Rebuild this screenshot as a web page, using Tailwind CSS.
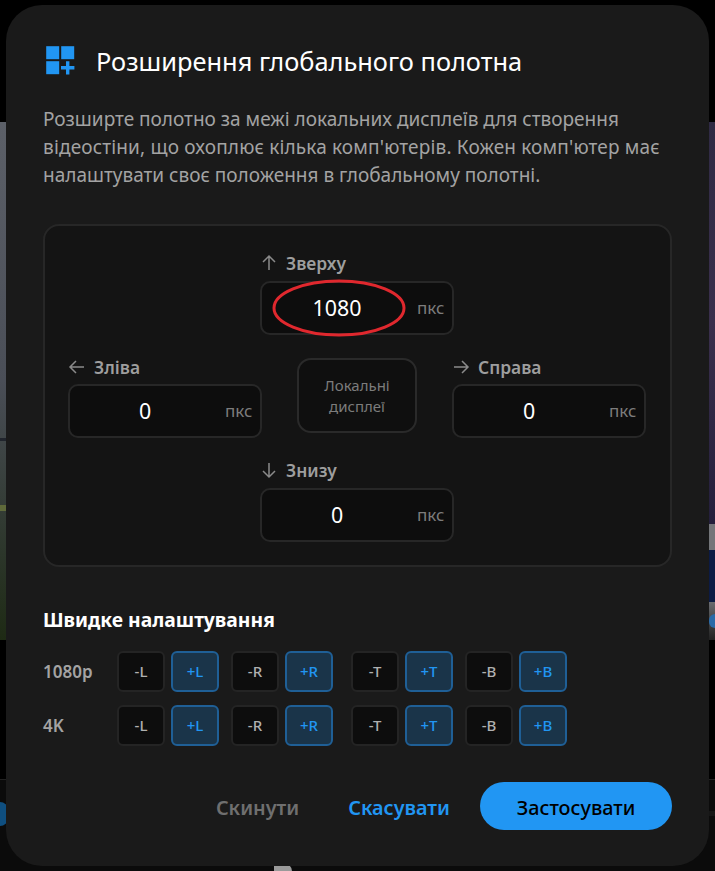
<!DOCTYPE html>
<html lang="uk">
<head>
<meta charset="utf-8">
<script src="https://cdn.jsdelivr.net/npm/@tailwindcss/browser@4"></script>
</head>
<body class="bg-black font-['Noto_Sans','Open_Sans',sans-serif]">
<div class="relative w-[715px] h-[871px] overflow-hidden bg-black">
  <!-- backdrop -->
  <div class="absolute left-0 top-[122px] w-[8px] h-[518px] bg-gradient-to-b from-[#5c6068] via-[#4a4e57] to-[#1e2a14]"></div>
  <div class="absolute left-0 top-[438px] w-[8px] h-[3px] bg-[#20242c]"></div>
  <div class="absolute left-0 top-[505px] w-[8px] h-[6px] bg-[#5f6a3a]"></div>
  <div class="absolute right-0 top-[122px] w-[9px] h-[402px] bg-gradient-to-b from-[#2f2a44] via-[#3a2f4c] to-[#241f3c]"></div>
  <div class="absolute right-0 top-[524px] w-[9px] h-[26px] bg-[#74767a]"></div>
  <div class="absolute right-0 top-[550px] w-[9px] h-[52px] bg-[#0c1b44]"></div>
  <div class="absolute right-0 top-[602px] w-[9px] h-[38px] bg-gradient-to-b from-[#6a6c70] to-[#222222]"></div>
  <div class="absolute right-0 top-[614px] w-[6px] h-[14px] rounded-l-full bg-[#2a6aa8]"></div>
  <div class="absolute left-0 right-0 top-[779px] h-[92px] bg-[#0b0b0b]"></div>
  <div class="absolute left-0 right-0 top-[779px] h-px bg-[#222222]"></div>
  <div class="absolute left-0 right-0 top-[811px] h-[5px] bg-[#161616]"></div>
  <div class="absolute left-0 top-[802px] w-[8px] h-[24px] rounded-r-full bg-[#0f4f80]"></div>
  <div class="absolute left-[274px] top-[864px] w-[18px] h-[7px] rounded-tr-full bg-[#9a9a9a]"></div>

  <!-- dialog -->
  <div class="absolute left-[6px] top-[5px] w-[703px] h-[861px] rounded-[36px] bg-[#1a1a1a] pl-[37px] pr-[37px] pt-[38px]">
    <div class="flex items-center gap-[21px] h-[36px]">
      <svg width="30" height="30" viewBox="0 0 30 30" class="shrink-0 ml-[2px]">
        <rect x="1.2" y="0.2" width="13" height="13" fill="#2196f3"/>
        <rect x="16.2" y="0.2" width="13" height="13" fill="#2196f3"/>
        <rect x="1.2" y="15.2" width="13" height="13" fill="#2196f3"/>
        <path d="M16 21.8H29.4M22.7 15.2V28.4" stroke="#2196f3" stroke-width="3.4" fill="none"/>
      </svg>
      <h1 class="text-[25.4px] leading-[36px] font-normal text-white whitespace-nowrap">Розширення глобального полотна</h1>
    </div>
    <p class="mt-[26px] w-[640px] text-[19px] leading-[28px] text-[#a3a3a3]">Розширте полотно за межі локальних дисплеїв для створення <span class="tracking-[0.16px]">відеостіни, що охоплює кілька комп'ютерів. Кожен комп'ютер має</span> налаштувати своє положення в глобальному полотні.</p>

    <div class="relative mt-[35px] w-[629px] h-[343px] rounded-[16px] border-2 border-[#272727] bg-[#141414]">
      <div class="absolute left-[215px] top-[23px] w-[194px]">
        <div class="flex items-center gap-[8px] h-[28px] text-[#9e9e9e] text-[17.4px] font-semibold">
          <svg width="18" height="18" viewBox="0 0 18 18" fill="none" stroke="#8a8a8a" stroke-width="1.5"><path d="M9 16V2M3 8l6-6 6 6"/></svg>
          <span>Зверху</span>
        </div>
        <div class="mt-[4px] flex items-center h-[54px] rounded-[10px] border-2 border-[#272727] bg-[#0d0d0d]">
          <span class="w-[150px] text-center text-white text-[21.4px]">1080</span>
          <span class="ml-[5px] text-[#7c7c7c] text-[17px]">пкс</span>
        </div>
      </div>
      <div class="absolute left-[23px] top-[127px] w-[194px]">
        <div class="flex items-center gap-[8px] h-[28px] text-[#9e9e9e] text-[17.4px] font-semibold">
          <svg width="18" height="18" viewBox="0 0 18 18" fill="none" stroke="#8a8a8a" stroke-width="1.5"><path d="M16 9H2M8 3L2 9l6 6"/></svg>
          <span>Зліва</span>
        </div>
        <div class="mt-[3px] flex items-center h-[54px] rounded-[10px] border-2 border-[#272727] bg-[#0d0d0d]">
          <span class="w-[150px] text-center text-white text-[21.4px]">0</span>
          <span class="ml-[5px] text-[#7c7c7c] text-[17px]">пкс</span>
        </div>
      </div>
      <div class="absolute left-[252px] top-[132px] w-[120px] h-[75px] flex items-center justify-center text-center rounded-[14px] border-2 border-[#2a2a2a] bg-[#0f0f0f] text-[#7c7c7c] text-[15px] leading-[21px]">Локальні<br>дисплеї</div>
      <div class="absolute left-[407px] top-[127px] w-[194px]">
        <div class="flex items-center gap-[8px] h-[28px] text-[#9e9e9e] text-[17.4px] font-semibold">
          <svg width="18" height="18" viewBox="0 0 18 18" fill="none" stroke="#8a8a8a" stroke-width="1.5"><path d="M2 9h14M10 3l6 6-6 6"/></svg>
          <span>Справа</span>
        </div>
        <div class="mt-[3px] flex items-center h-[54px] rounded-[10px] border-2 border-[#272727] bg-[#0d0d0d]">
          <span class="w-[150px] text-center text-white text-[21.4px]">0</span>
          <span class="ml-[5px] text-[#7c7c7c] text-[17px]">пкс</span>
        </div>
      </div>
      <div class="absolute left-[215px] top-[230px] w-[194px]">
        <div class="flex items-center gap-[8px] h-[28px] text-[#9e9e9e] text-[17.4px] font-semibold">
          <svg width="18" height="18" viewBox="0 0 18 18" fill="none" stroke="#8a8a8a" stroke-width="1.5"><path d="M9 2v14M3 10l6 6 6-6"/></svg>
          <span>Знизу</span>
        </div>
        <div class="mt-[4px] flex items-center h-[54px] rounded-[10px] border-2 border-[#272727] bg-[#0d0d0d]">
          <span class="w-[150px] text-center text-white text-[21.4px]">0</span>
          <span class="ml-[5px] text-[#7c7c7c] text-[17px]">пкс</span>
        </div>
      </div>
      <svg class="absolute left-[225px] top-[51px]" width="138" height="62" viewBox="0 0 138 62" fill="none"><ellipse cx="69" cy="31" rx="65" ry="27" stroke="#e0282e" stroke-width="3"/></svg>
    </div>

    <h2 class="mt-[39px] text-[19.3px] leading-[27px] font-bold text-white">Швидке налаштування</h2>

    <div class="mt-[18px] flex flex-col gap-[13px]">
      <div class="flex items-center h-[41px]">
        <span class="w-[74px] text-[#a3a3a3] text-[17px] font-semibold">1080p</span>
        <div class="flex gap-[6px] text-[15px] font-medium">
          <button class="w-[48px] h-[41px] rounded-[6px] border-2 border-[#242424] bg-[#0d0d0d] text-[#b0b0b0]">-L</button>
          <button class="w-[48px] h-[41px] rounded-[6px] border-2 border-[#1f5f96] bg-[#1a3449] text-[#2196f3]">+L</button>
          <button class="ml-[6px] w-[48px] h-[41px] rounded-[6px] border-2 border-[#242424] bg-[#0d0d0d] text-[#b0b0b0]">-R</button>
          <button class="w-[48px] h-[41px] rounded-[6px] border-2 border-[#1f5f96] bg-[#1a3449] text-[#2196f3]">+R</button>
          <button class="ml-[12px] w-[48px] h-[41px] rounded-[6px] border-2 border-[#242424] bg-[#0d0d0d] text-[#b0b0b0]">-T</button>
          <button class="w-[48px] h-[41px] rounded-[6px] border-2 border-[#1f5f96] bg-[#1a3449] text-[#2196f3]">+T</button>
          <button class="ml-[6px] w-[48px] h-[41px] rounded-[6px] border-2 border-[#242424] bg-[#0d0d0d] text-[#b0b0b0]">-B</button>
          <button class="w-[48px] h-[41px] rounded-[6px] border-2 border-[#1f5f96] bg-[#1a3449] text-[#2196f3]">+B</button>
        </div>
      </div>
      <div class="flex items-center h-[41px]">
        <span class="w-[74px] text-[#a3a3a3] text-[17px] font-semibold">4K</span>
        <div class="flex gap-[6px] text-[15px] font-medium">
          <button class="w-[48px] h-[41px] rounded-[6px] border-2 border-[#242424] bg-[#0d0d0d] text-[#b0b0b0]">-L</button>
          <button class="w-[48px] h-[41px] rounded-[6px] border-2 border-[#1f5f96] bg-[#1a3449] text-[#2196f3]">+L</button>
          <button class="ml-[6px] w-[48px] h-[41px] rounded-[6px] border-2 border-[#242424] bg-[#0d0d0d] text-[#b0b0b0]">-R</button>
          <button class="w-[48px] h-[41px] rounded-[6px] border-2 border-[#1f5f96] bg-[#1a3449] text-[#2196f3]">+R</button>
          <button class="ml-[12px] w-[48px] h-[41px] rounded-[6px] border-2 border-[#242424] bg-[#0d0d0d] text-[#b0b0b0]">-T</button>
          <button class="w-[48px] h-[41px] rounded-[6px] border-2 border-[#1f5f96] bg-[#1a3449] text-[#2196f3]">+T</button>
          <button class="ml-[6px] w-[48px] h-[41px] rounded-[6px] border-2 border-[#242424] bg-[#0d0d0d] text-[#b0b0b0]">-B</button>
          <button class="w-[48px] h-[41px] rounded-[6px] border-2 border-[#1f5f96] bg-[#1a3449] text-[#2196f3]">+B</button>
        </div>
      </div>
    </div>

    <div class="mt-[36px] flex items-center justify-end w-[629px] text-[19.8px] font-semibold">
      <span class="pt-[3px] text-[#6f6f6f]">Скинути</span>
      <span class="pt-[3px] ml-[49px] text-[#2196f3]">Скасувати</span>
      <button class="ml-[30px] w-[192px] h-[48px] pt-[3px] rounded-full bg-[#2196f3] text-black font-medium">Застосувати</button>
    </div>
  </div>
</div>
</body>
</html>
